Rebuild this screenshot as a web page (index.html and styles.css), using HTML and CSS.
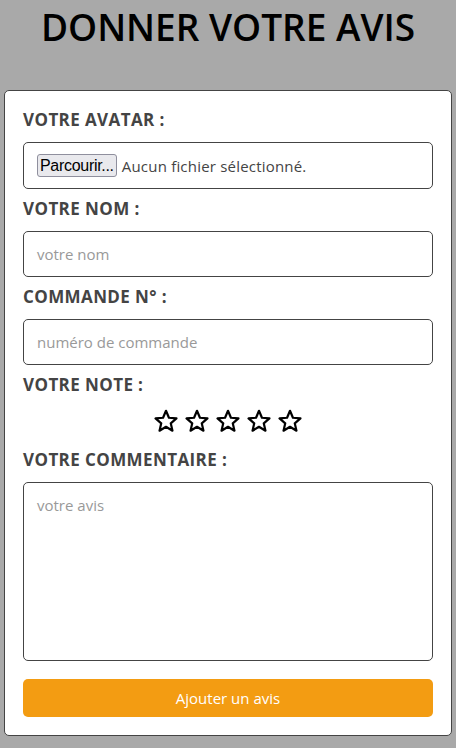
FILE: index.html
```html
<!DOCTYPE html>
<html lang="fr">
<head>
<meta charset="utf-8">
<title>Donner votre avis</title>
<link rel="stylesheet" href="styles.css">
</head>
<body>
<h1 class="title">DONNER VOTRE AVIS</h1>
<form class="card">
  <label class="label">VOTRE AVATAR :</label>
  <div class="field file-field">
    <span class="file-btn">Parcourir...</span>
    <span class="file-text">Aucun fichier sélectionné.</span>
  </div>
  <label class="label">VOTRE NOM :</label>
  <div class="field input-field"><span class="placeholder">votre nom</span></div>
  <label class="label">COMMANDE N° :</label>
  <div class="field input-field"><span class="placeholder">numéro de commande</span></div>
  <label class="label">VOTRE NOTE :</label>
  <div class="stars">
    <svg class="star" viewBox="0 0 24 24"><polygon points="12,1.8 14.94,8.75 22.46,9.4 16.76,14.35 18.47,21.7 12,17.8 5.53,21.7 7.24,14.35 1.54,9.4 9.06,8.75"/></svg>
    <svg class="star" viewBox="0 0 24 24"><polygon points="12,1.8 14.94,8.75 22.46,9.4 16.76,14.35 18.47,21.7 12,17.8 5.53,21.7 7.24,14.35 1.54,9.4 9.06,8.75"/></svg>
    <svg class="star" viewBox="0 0 24 24"><polygon points="12,1.8 14.94,8.75 22.46,9.4 16.76,14.35 18.47,21.7 12,17.8 5.53,21.7 7.24,14.35 1.54,9.4 9.06,8.75"/></svg>
    <svg class="star" viewBox="0 0 24 24"><polygon points="12,1.8 14.94,8.75 22.46,9.4 16.76,14.35 18.47,21.7 12,17.8 5.53,21.7 7.24,14.35 1.54,9.4 9.06,8.75"/></svg>
    <svg class="star" viewBox="0 0 24 24"><polygon points="12,1.8 14.94,8.75 22.46,9.4 16.76,14.35 18.47,21.7 12,17.8 5.53,21.7 7.24,14.35 1.54,9.4 9.06,8.75"/></svg>
  </div>
  <label class="label">VOTRE COMMENTAIRE :</label>
  <div class="field textarea-field"><span class="placeholder">votre avis</span></div>
  <div class="submit">Ajouter un avis</div>
</form>
</body>
</html>
```
FILE: styles.css
```css
html, body {
  margin: 0;
  padding: 0;
}
body {
  background: #a9a9a9;
  font-family: "Open Sans", sans-serif;
  width: 456px;
  height: 748px;
  overflow: hidden;
}
.title {
  margin: 0;
  height: 90px;
  box-sizing: border-box;
  padding-top: 5px;
  text-align: center;
  font-size: 37px;
  font-weight: 600;
  line-height: 44px;
  color: #000;
}
.card {
  margin: 0 4px;
  background: #fff;
  border: 1px solid #444;
  border-radius: 5px;
  padding: 18px 18px 18px;
  display: flex;
  flex-direction: column;
}
.label {
  font-size: 17px;
  font-weight: 700;
  letter-spacing: 0.4px;
  color: #444;
  line-height: 22px;
  margin-bottom: 11px;
}
.field {
  border: 1px solid #444;
  border-radius: 5px;
  box-sizing: border-box;
  display: flex;
  align-items: center;
  padding: 0 13px;
  margin-bottom: 9px;
}
.file-field {
  height: 47px;
}
.input-field {
  height: 46px;
}
.file-btn {
  font-family: "Liberation Sans", sans-serif;
  font-size: 16px;
  color: #000;
  background: #e9e9ed;
  border: 1px solid #8f8f9d;
  border-radius: 3px;
  padding: 2px 2px;
  line-height: 17px;
  margin-right: 5px;
  letter-spacing: -0.3px;
}
.file-text {
  font-size: 15px;
  color: #444;
  letter-spacing: 0.2px;
}
.placeholder {
  font-size: 15px;
  color: #999;
}
.stars {
  display: flex;
  justify-content: center;
  gap: 7px;
  margin: 2px 0 16px;
}
.star {
  width: 24px;
  height: 24px;
  fill: none;
  stroke: #000;
  stroke-width: 2.2;
  stroke-linejoin: round;
}
.textarea-field {
  height: 179px;
  align-items: flex-start;
  padding-top: 12px;
  margin-bottom: 18px;
}
.submit {
  background: #f39c12;
  color: #fff;
  border-radius: 5px;
  height: 38px;
  display: flex;
  align-items: center;
  justify-content: center;
  font-size: 15px;
}
```
